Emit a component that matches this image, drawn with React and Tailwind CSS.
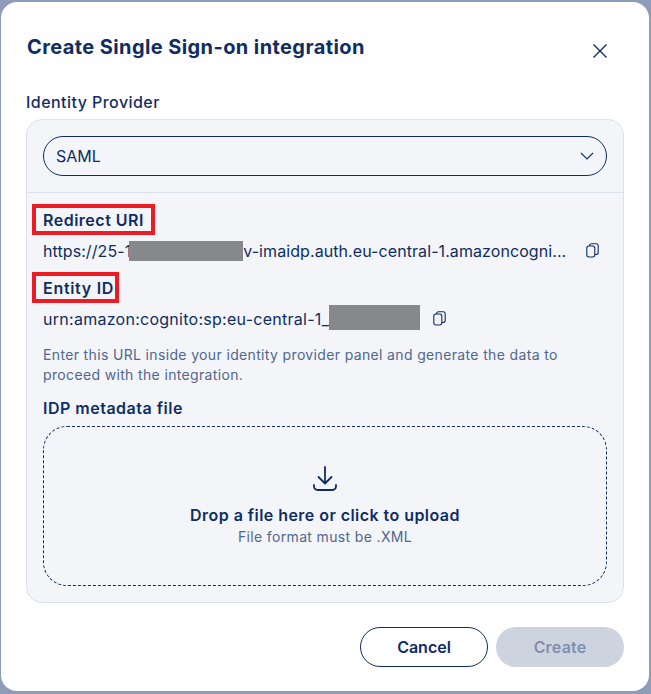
import React from "react";

const navy = "text-[#0f2d63]";

function CopyIcon() {
  return (
    <svg width="13" height="15" viewBox="0 0 13 15" fill="none" stroke="#0f2d63" strokeWidth="1.1" className="shrink-0">
      <rect x="0.8" y="3" width="8" height="11" rx="2.2" />
      <path d="M3.500 3V2.800a2 2 0 0 1 2-2h4.700a2 2 0 0 1 2 2v6.700a2 2 0 0 1-2 2h-1.400" />
    </svg>
  );
}

function Label({ children, className }) {
  return (
    <div className="h-[31px] flex items-center">
      <span className={`-ml-[11px] pl-[7px] h-[31px] flex items-center border-[4px] border-[#ed1c24] text-[16px] font-semibold ${navy} ${className}`}>
        {children}
      </span>
    </div>
  );
}

export default function App() {
  return (
    <div className="h-[694px] w-[651px] bg-[#8e9bb9] pl-[1px] pt-[2px] overflow-hidden" style={{ fontFamily: "Inter, sans-serif" }}>
      <div className="w-[648px] h-[689px] bg-white rounded-[16px] px-[25px] flex flex-col">
        <div className="flex items-start justify-between pt-[33px] h-[88px]">
          <h1 className={`ml-[1px] text-[20px] leading-[24px] font-bold ${navy} tracking-[0.4px]`}>Create Single Sign-on integration</h1>
          <svg width="16" height="16" viewBox="0 0 16 16" fill="none" stroke="#0f2d63" strokeWidth="1.4" className="mt-[8px] mr-[16px]">
            <path d="M1.500 1.500l13 13M14.500 1.500l-13 13" />
          </svg>
        </div>

        <div className={`h-[29px] pb-[6px] flex items-center text-[16px] font-medium tracking-[0.45px] ${navy}`}>Identity Provider</div>

        <div className="w-[598px] h-[484px] bg-[#f3f5f8] border border-[#dde1ea] rounded-[16px] flex flex-col">
          <div className="h-[73px] border-b border-[#dde1ea] px-[16px] pt-[16px]">
            <div className="h-[40px] w-[564px] border border-[#0f2d63] rounded-full flex items-center justify-between pl-[12px] pr-[12px]">
              <span className={`text-[16px] ${navy}`}>SAML</span>
              <svg width="14" height="8" viewBox="0 0 14 8" fill="none" stroke="#0f2d63" strokeWidth="1.1">
                <path d="M1 1l6 6 6-6" />
              </svg>
            </div>
          </div>

          <div className="px-[16px] pt-[11px] flex flex-col">
            <Label className="tracking-[0.5px] pr-[7px]">Redirect URI</Label>
            <div className={`h-[37px] pb-[6px] flex items-center justify-between text-[16px] tracking-[0.08px] ${navy} w-[556px]`}>
              <span className="flex items-center whitespace-nowrap">
                https://25-1
                <span className="inline-block w-[114px] h-[20px] -ml-[2px] bg-[#87888c]" />
                v-imaidp.auth.eu-central-1.amazoncogni...
              </span>
              <CopyIcon />
            </div>
            <Label className="tracking-[0.7px] pr-[1px]">Entity ID</Label>
            <div className={`h-[31px] flex items-center text-[16px] tracking-[0.27px] ${navy}`}>
              <span className="whitespace-nowrap">urn:amazon:cognito:sp:eu-central-1_</span>
              <span className="inline-block w-[91px] h-[25px] -mt-[3px] bg-[#87888c]" />
              <span className="ml-[13px] flex"><CopyIcon /></span>
            </div>
            <p className="text-[14px] leading-[20px] tracking-[0.35px] text-[#51678f] mt-[11px]">
              Enter this URL inside your identity provider panel and generate the data to proceed with the integration.
            </p>
            <div className={`mt-[11px] h-[24px] flex items-center text-[16px] font-semibold tracking-[0.5px] ${navy}`}>IDP metadata file</div>
            <div className="mt-[6px] h-[160px] w-[564px] border border-dashed border-[#0f2d63] rounded-[24px] flex flex-col items-center pt-[38px]">
              <svg width="26" height="27" viewBox="0 0 26 27" fill="none" stroke="#0f2d63" strokeWidth="1.8" strokeLinecap="round" strokeLinejoin="round">
                <path d="M13 2v16M6.500 12l6.500 6.500L19.500 12" />
                <path d="M2 20v1.500A3.500 3.500 0 0 0 5.500 25h15a3.500 3.500 0 0 0 3.500-3.500V20" />
              </svg>
              <div className={`mt-[11px] text-[16px] leading-[24px] font-semibold tracking-[0.45px] ${navy}`}>Drop a file here or click to upload</div>
              <div className="text-[14px] leading-[20px] tracking-[0.35px] text-[#51678f]">File format must be .XML</div>
            </div>
          </div>
        </div>

        <div className="flex justify-end gap-[8px] mt-[24px]">
          <div className={`w-[128px] h-[40px] rounded-full border border-[#0f2d63] flex items-center justify-center text-[16px] font-semibold ${navy}`}>Cancel</div>
          <div className="w-[128px] h-[40px] rounded-full bg-[#cdd3df] flex items-center justify-center text-[16px] font-semibold tracking-[0.2px] text-[#7f8fad]">Create</div>
        </div>
      </div>
    </div>
  );
}
